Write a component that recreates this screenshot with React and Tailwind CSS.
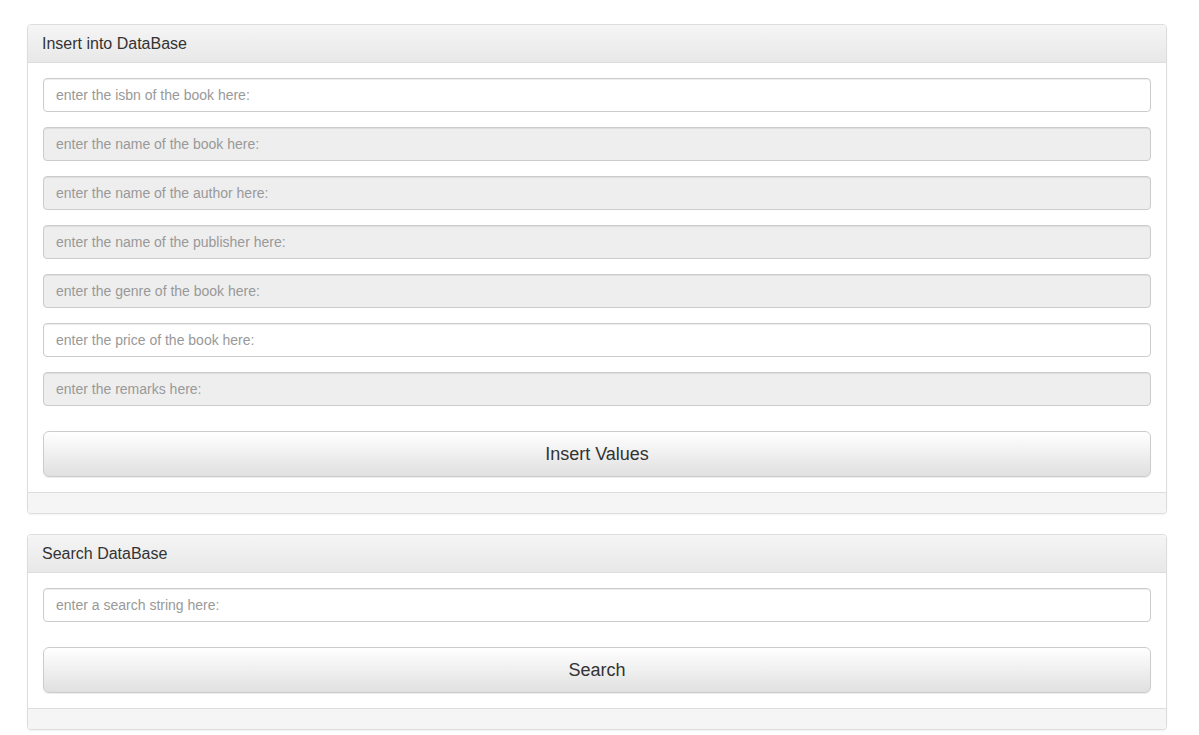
import React from "react";

const insertFields = [
  { ph: "enter the isbn of the book here:", readOnly: false },
  { ph: "enter the name of the book here:", readOnly: true },
  { ph: "enter the name of the author here:", readOnly: true },
  { ph: "enter the name of the publisher here:", readOnly: true },
  { ph: "enter the genre of the book here:", readOnly: true },
  { ph: "enter the price of the book here:", readOnly: false },
  { ph: "enter the remarks here:", readOnly: true },
];

const Field = ({ ph, readOnly }) => (
  <input
    type="text"
    placeholder={ph}
    readOnly={readOnly}
    className={
      "block w-full h-[34px] rounded-[4px] border border-[#ccc] px-[12px] text-[14px] text-[#555] placeholder:text-[#999] shadow-[inset_0_1px_1px_rgba(0,0,0,0.075)] outline-none " +
      (readOnly ? "bg-[#eee]" : "bg-white")
    }
  />
);

const BigButton = ({ label }) => (
  <button className="mt-[25px] block w-full h-[46px] rounded-[6px] border border-[#ccc] bg-gradient-to-b from-white to-[#e0e0e0] text-[18px] text-[#333] shadow-[inset_0_1px_0_rgba(255,255,255,0.15),0_1px_1px_rgba(0,0,0,0.075)]">
    {label}
  </button>
);

const Panel = ({ title, children }) => (
  <div className="w-[1140px] rounded-[4px] border border-[#ddd] bg-white shadow-[0_1px_2px_rgba(0,0,0,0.05)] overflow-hidden">
    <div className="border-b border-[#ddd] bg-gradient-to-b from-[#f5f5f5] to-[#e8e8e8] px-[14px] py-[10px] text-[16px] leading-[17px] text-[#333]">
      {title}
    </div>
    <div className="p-[15px]">{children}</div>
    <div className="h-[21px] border-t border-[#ddd] bg-[#f5f5f5]" />
  </div>
);

export default function App() {
  return (
    <div
      className="min-h-[735px] bg-white pt-6 pl-[27px] flex flex-col gap-5"
      style={{ fontFamily: '"Liberation Sans", Arial, sans-serif' }}
    >
      <Panel title="Insert into DataBase">
        <div className="flex flex-col gap-[15px]">
          {insertFields.map((f) => (
            <Field key={f.ph} {...f} />
          ))}
        </div>
        <BigButton label="Insert Values" />
      </Panel>
      <Panel title="Search DataBase">
        <Field ph="enter a search string here:" readOnly={false} />
        <BigButton label="Search" />
      </Panel>
    </div>
  );
}
